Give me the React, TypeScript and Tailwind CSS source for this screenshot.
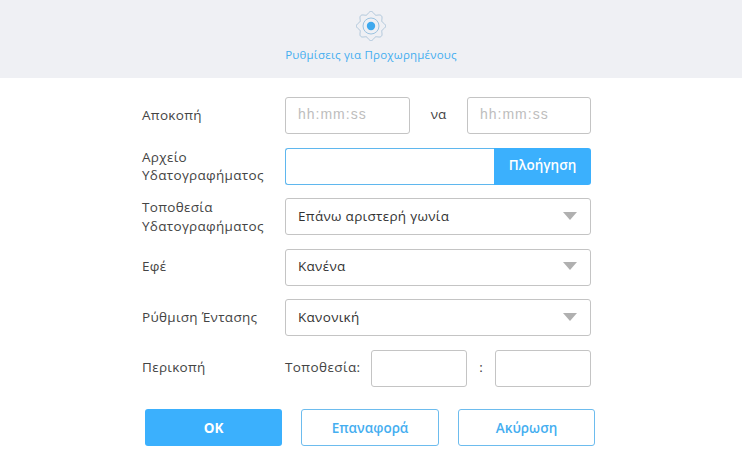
import React from 'react';

const font = "font-['Open_Sans','Noto_Sans',sans-serif]";

const gearPath = () => {
  const pts: string[] = [];
  for (let i = 0; i < 160; i++) {
    const a = (i / 160) * Math.PI * 2;
    const r = 13.2 + 1.4 * Math.cos(8 * a);
    pts.push(`${(15 + r * Math.sin(a)).toFixed(2)} ${(15 - r * Math.cos(a)).toFixed(2)}`);
  }
  return `M${pts.join('L')}Z`;
};

const GearIcon = () => (
  <svg width="30" height="30" viewBox="0 0 30 30" fill="none">
    <path d={gearPath()} stroke="#adc6db" strokeWidth="1" />
    <circle cx="15" cy="15" r="8" stroke="#9cc3e0" strokeWidth="1" />
    <circle cx="15" cy="15" r="4.2" fill="#3fa9ee" />
  </svg>
);

const Row: React.FC<{ label: string; sub?: string; children: React.ReactNode }> = ({ label, sub, children }) => (
  <div className="flex h-[37px] items-center">
    {sub ? (
      <div className="w-[143px] text-[13.5px] leading-[18.5px] tracking-[0.3px] text-[#444]">
        {label}
        <br />
        {sub}
      </div>
    ) : (
      <div className="w-[143px] pb-[2px] text-[13.5px] leading-[18px] tracking-[0.3px] text-[#444]">{label}</div>
    )}
    <div className="flex h-full w-[306px] items-center">{children}</div>
  </div>
);

const Box: React.FC<{ placeholder?: string; className: string }> = ({ placeholder, className }) => (
  <div className={`flex h-full items-center rounded-[3px] border border-[#c4c4c4] bg-white px-3 pb-[2px] font-['Liberation_Sans',sans-serif] text-[14px] tracking-[1px] text-[#bdbdbd] ${className}`}>
    {placeholder}
  </div>
);

const Select: React.FC<{ value: string }> = ({ value }) => (
  <div className="flex h-full w-full items-center justify-between rounded-[3px] border border-[#c4c4c4] bg-white pb-[2px] pl-3 pr-[13px] text-[13.5px] tracking-[0.3px] text-[#333]">
    <span>{value}</span>
    <span className="h-0 w-0 border-x-[7px] border-t-[8px] border-x-transparent border-t-[#b0b0b0]" />
  </div>
);

export default function App() {
  return (
    <div className={`flex h-[460px] w-[742px] flex-col overflow-hidden bg-white ${font}`}>
      <div className="flex h-[78px] flex-col items-center bg-[#eff0f4] pt-[11px]">
        <GearIcon />
        <div className="mt-[5px] text-[11.5px] leading-[18px] tracking-[0.2px] text-[#45aef0]">Ρυθμίσεις για Προχωρημένους</div>
      </div>

      <div className="ml-[142px] mt-[19px] flex flex-col gap-[13.6px]">
        <Row label="Αποκοπή">
          <Box placeholder="hh:mm:ss" className="w-[125px]" />
          <span className="w-[57px] pb-[2px] text-center text-[13.5px] text-[#444]">να</span>
          <Box placeholder="hh:mm:ss" className="w-[124px]" />
        </Row>
        <Row label="Αρχείο" sub="Υδατογραφήματος">
          <div className="h-full flex-1 rounded-l-[3px] border border-r-0 border-[#5fb7ee] bg-white" />
          <button className="h-full w-[97px] rounded-r-[3px] bg-[#3bb0fd] pb-[2px] text-[13.5px] font-semibold text-white">Πλοήγηση</button>
        </Row>
        <Row label="Τοποθεσία" sub="Υδατογραφήματος">
          <Select value="Επάνω αριστερή γωνία" />
        </Row>
        <Row label="Εφέ">
          <Select value="Κανένα" />
        </Row>
        <Row label="Ρύθμιση Έντασης">
          <Select value="Κανονική" />
        </Row>
        <Row label="Περικοπή">
          <span className="w-[86px] pb-[2px] text-[13.5px] tracking-[0.4px] text-[#444]">Τοποθεσία:</span>
          <Box className="w-[96px]" />
          <span className="w-[28px] pb-[2px] text-center text-[13.5px] text-[#444]">:</span>
          <Box className="w-[96px]" />
        </Row>
      </div>

      <div className="ml-[145px] mt-[22px] flex gap-[19px]">
        <button className="h-[37px] w-[137px] rounded-[3px] bg-[#3bb0fd] pt-[1px] text-[13.5px] font-bold text-white">OK</button>
        <button className="h-[37px] w-[138px] rounded-[3px] border border-[#6dbcee] bg-white pt-[2px] text-[13.5px] font-semibold text-[#45aef0]">Επαναφορά</button>
        <button className="h-[37px] w-[137px] rounded-[3px] border border-[#6dbcee] bg-white pt-[2px] text-[13.5px] font-semibold text-[#45aef0]">Ακύρωση</button>
      </div>
    </div>
  );
}
